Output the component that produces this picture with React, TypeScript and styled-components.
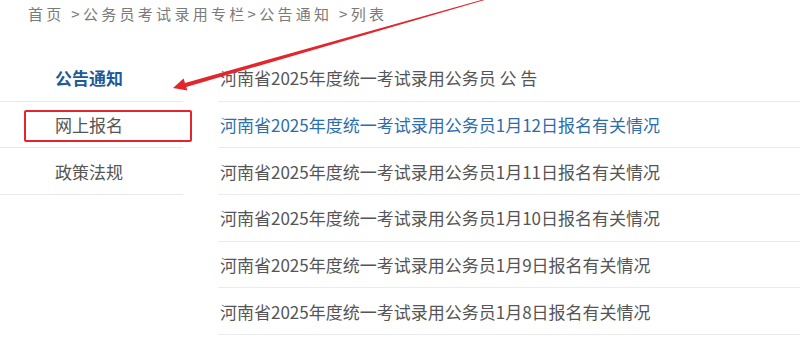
import React from "react";
import styled, { createGlobalStyle } from "styled-components";

const GlobalStyle = createGlobalStyle`
  html, body {
    margin: 0;
    padding: 0;
    background: #fff;
  }
  body {
    font-family: "Noto Sans CJK SC", "Noto Sans", sans-serif;
  }
`;

const Page = styled.div`
  position: relative;
  width: 800px;
  height: 347px;
  overflow: hidden;
  background: #fff;
`;

const Crumbs = styled.div`
  height: 55px;
  box-sizing: border-box;
  padding: 0 0 0 28px;
  line-height: 27px;
  font-size: 15px;
  letter-spacing: 3.3px;
  color: #7a7a7a;
`;

const Body = styled.div`
  display: flex;
  align-items: flex-start;
`;

const Side = styled.ul`
  list-style: none;
  margin: 0;
  padding: 0;
  width: 183px;
  flex-shrink: 0;
`;

const SideItem = styled.li<{ active?: boolean; marked?: boolean }>`
  position: relative;
  height: 46.7px;
  box-sizing: border-box;
  display: flex;
  align-items: center;
  padding-left: 55px;
  font-size: 17px;
  color: ${p => (p.active ? "#1d5a98" : "#555")};
  font-weight: ${p => (p.active ? 700 : 400)};
  border-bottom: 1px solid #e8e8e8;

  &::after {
    content: "";
    display: ${p => (p.marked ? "block" : "none")};
    position: absolute;
    left: 24px;
    top: 8px;
    width: 168px;
    height: 32px;
    box-sizing: border-box;
    border: 2px solid #e3262e;
    border-radius: 2px;
  }
`;

const List = styled.ul`
  list-style: none;
  margin: 0 0 0 35px;
  padding: 0;
  flex: 1;
`;

const Row = styled.li<{ hover?: boolean }>`
  height: 46.7px;
  box-sizing: border-box;
  display: flex;
  align-items: center;
  padding-left: 2px;
  font-size: 17px;
  white-space: nowrap;
  color: ${p => (p.hover ? "#2c6eab" : "#555")};
  border-bottom: 1px solid #ebebeb;
`;

const Overlay = styled.svg`
  position: absolute;
  left: 0;
  top: 0;
  pointer-events: none;
`;

const rows = [
  "河南省2025年度统一考试录用公务员 公 告",
  "河南省2025年度统一考试录用公务员1月12日报名有关情况",
  "河南省2025年度统一考试录用公务员1月11日报名有关情况",
  "河南省2025年度统一考试录用公务员1月10日报名有关情况",
  "河南省2025年度统一考试录用公务员1月9日报名有关情况",
  "河南省2025年度统一考试录用公务员1月8日报名有关情况",
];

const App: React.FC = () => {
  return (
    <Page>
      <GlobalStyle />
      <Crumbs>首页 &gt;公务员考试录用专栏&gt;公告通知 &gt;列表</Crumbs>
      <Body>
        <Side>
          <SideItem active>公告通知</SideItem>
          <SideItem marked>网上报名</SideItem>
          <SideItem>政策法规</SideItem>
        </Side>
        <List>
          {rows.map((r, i) => (
            <Row key={i} hover={i === 1}>
              {r}
            </Row>
          ))}
        </List>
      </Body>
      {/* annotation arrow */}
      <Overlay width="800" height="347" viewBox="0 0 800 347">
        <polygon
          points="490.1,-1.6 186.2,86.9 187.5,90.5 173,88 183.6,78.5 185,82.9 489.9,-2.4"
          fill="#e3262e"
        />
      </Overlay>
    </Page>
  );
};

export default App;
